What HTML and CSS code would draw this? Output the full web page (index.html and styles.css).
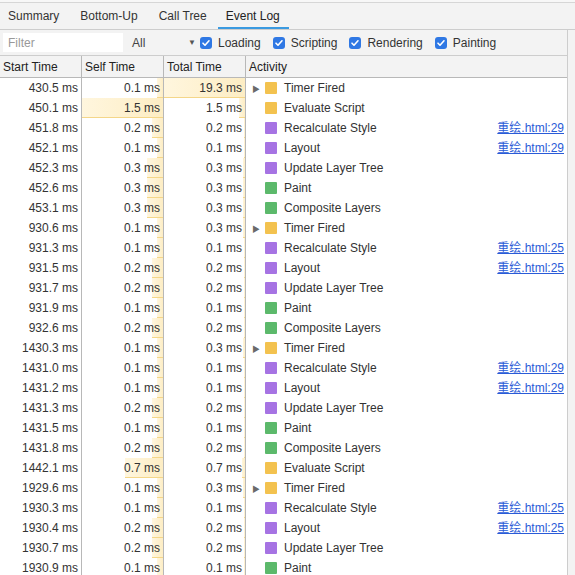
FILE: index.html
```html
<!DOCTYPE html>
<html lang="en">
<head>
  <meta charset="UTF-8">
  <title>Event Log</title>
  <link rel="stylesheet" href="styles.css">
</head>
<body>
  <div class="ruler"></div>
  <div class="tabs">
    <span class="tab">Summary</span>
    <span class="tab">Bottom-Up</span>
    <span class="tab">Call Tree</span>
    <span class="tab active">Event Log</span>
  </div>
  <div class="main">
    <div class="panel">
      <div class="toolbar">
        <input class="filter" placeholder="Filter">
        <span class="select">All <span class="caret">&#9660;</span></span>
        <label class="cb"><span class="box"><svg viewBox="0 0 12 12"><path d="M3 6.2l2 2 4-4.4" fill="none" stroke="#fff" stroke-width="1.6" stroke-linecap="round" stroke-linejoin="round"/></svg></span>Loading</label>
        <label class="cb"><span class="box"><svg viewBox="0 0 12 12"><path d="M3 6.2l2 2 4-4.4" fill="none" stroke="#fff" stroke-width="1.6" stroke-linecap="round" stroke-linejoin="round"/></svg></span>Scripting</label>
        <label class="cb"><span class="box"><svg viewBox="0 0 12 12"><path d="M3 6.2l2 2 4-4.4" fill="none" stroke="#fff" stroke-width="1.6" stroke-linecap="round" stroke-linejoin="round"/></svg></span>Rendering</label>
        <label class="cb"><span class="box"><svg viewBox="0 0 12 12"><path d="M3 6.2l2 2 4-4.4" fill="none" stroke="#fff" stroke-width="1.6" stroke-linecap="round" stroke-linejoin="round"/></svg></span>Painting</label>
      </div>
      <div class="grid head">
        <div class="cell">Start Time</div>
        <div class="cell">Self Time</div>
        <div class="cell">Total Time</div>
        <div class="cell">Activity</div>
      </div>
      <div class="rows" id="rows"></div>
    </div>
    <div class="side"></div>
  </div>
  <script>
    // start, self, total, name, color, expandable, link
    const events = [
      ['430.5', '0.1', '19.3', 'Timer Fired', 'y', 1, ''],
      ['450.1', '1.5', '1.5', 'Evaluate Script', 'y', 0, ''],
      ['451.8', '0.2', '0.2', 'Recalculate Style', 'p', 0, '29'],
      ['452.1', '0.1', '0.1', 'Layout', 'p', 0, '29'],
      ['452.3', '0.3', '0.3', 'Update Layer Tree', 'p', 0, ''],
      ['452.6', '0.3', '0.3', 'Paint', 'g', 0, ''],
      ['453.1', '0.3', '0.3', 'Composite Layers', 'g', 0, ''],
      ['930.6', '0.1', '0.3', 'Timer Fired', 'y', 1, ''],
      ['931.3', '0.1', '0.1', 'Recalculate Style', 'p', 0, '25'],
      ['931.5', '0.2', '0.2', 'Layout', 'p', 0, '25'],
      ['931.7', '0.2', '0.2', 'Update Layer Tree', 'p', 0, ''],
      ['931.9', '0.1', '0.1', 'Paint', 'g', 0, ''],
      ['932.6', '0.2', '0.2', 'Composite Layers', 'g', 0, ''],
      ['1430.3', '0.1', '0.3', 'Timer Fired', 'y', 1, ''],
      ['1431.0', '0.1', '0.1', 'Recalculate Style', 'p', 0, '29'],
      ['1431.2', '0.1', '0.1', 'Layout', 'p', 0, '29'],
      ['1431.3', '0.2', '0.2', 'Update Layer Tree', 'p', 0, ''],
      ['1431.5', '0.1', '0.1', 'Paint', 'g', 0, ''],
      ['1431.8', '0.2', '0.2', 'Composite Layers', 'g', 0, ''],
      ['1442.1', '0.7', '0.7', 'Evaluate Script', 'y', 0, ''],
      ['1929.6', '0.1', '0.3', 'Timer Fired', 'y', 1, ''],
      ['1930.3', '0.1', '0.1', 'Recalculate Style', 'p', 0, '25'],
      ['1930.4', '0.2', '0.2', 'Layout', 'p', 0, '25'],
      ['1930.7', '0.2', '0.2', 'Update Layer Tree', 'p', 0, ''],
      ['1930.9', '0.1', '0.1', 'Paint', 'g', 0, '']
    ];
    const maxSelf = 1.5, maxTotal = 19.3;
    const rows = document.getElementById('rows');
    function barCell(v, max) {
      const w = Math.max(1, Math.round(parseFloat(v) / max * 100));
      return '<div class="cell num bar"><span class="fill" style="width:' + w + '%"></span><span class="t">' + v + ' ms</span></div>';
    }
    events.forEach(e => {
      const row = document.createElement('div');
      row.className = 'grid row';
      row.innerHTML =
        '<div class="cell num">' + e[0] + ' ms</div>' +
        barCell(e[1], maxSelf) +
        barCell(e[2], maxTotal) +
        '<div class="cell act">' +
          '<span class="arrow">' + (e[5] ? '&#9654;' : '') + '</span>' +
          '<span class="sw ' + e[4] + '"></span>' +
          '<span class="name">' + e[3] + '</span>' +
          (e[6] ? '<a class="link">重绘.html:' + e[6] + '</a>' : '') +
        '</div>';
      rows.appendChild(row);
    });
  </script>
</body>
</html>
```
FILE: styles.css
```css
html, body {
  margin: 0;
  padding: 0;
  height: 100%;
  overflow: hidden;
}
body {
  background: #f3f3f3;
  font-family: "Liberation Sans", Arial, "Noto Sans CJK SC", sans-serif;
  font-size: 12px;
  color: #333;
}
.ruler {
  height: 2px;
  background: #f7f7f7;
  border-bottom: 1px solid #d6d6d6;
}
.tabs {
  display: flex;
  height: 26px;
  border-bottom: 1px solid #cdcdcd;
  background: #f3f3f3;
}
.tab {
  display: flex;
  align-items: center;
  padding: 0 9px 0 8px;
  font-size: 12px;
  color: #333;
  height: 100%;
  box-sizing: border-box;
}
.tab:nth-child(2) { margin-left: 4px; }
.tab:nth-child(3) { margin-left: 4px; }
.tab:nth-child(4) { margin-left: 2px; }
.tab.active {
  color: #222;
  border-bottom: 2px solid #3b9ae0;
  padding-top: 2px;
}
.main {
  display: flex;
  height: calc(100% - 30px);
}
.panel {
  width: 567px;
  background: #fff;
  border-right: 1px solid #cdcdcd;
  display: flex;
  flex-direction: column;
}
.side {
  flex: 1;
  background: #f3f3f3;
}
.toolbar {
  display: flex;
  flex-shrink: 0;
  align-items: center;
  height: 25px;
  background: #f3f3f3;
  border-bottom: 1px solid #cdcdcd;
  padding-left: 3px;
}
.filter {
  width: 120px;
  height: 19px;
  border: none;
  background: #fff;
  padding: 0 5px;
  box-sizing: border-box;
  font-family: inherit;
  font-size: 12px;
  outline: none;
}
.filter::placeholder { color: #999; }
.select {
  width: 68px;
  margin-left: 9px;
  display: flex;
  justify-content: space-between;
  align-items: center;
  color: #444;
}
.caret {
  font-size: 8px;
  color: #555;
  margin-right: 4px;
}
.cb {
  display: flex;
  align-items: center;
  margin-right: 12px;
  color: #333;
}
.box {
  width: 12px;
  height: 12px;
  border-radius: 3px;
  background: #2f78e4;
  margin-right: 6px;
  display: flex;
}
.box svg { width: 12px; height: 12px; }
.grid {
  display: grid;
  grid-template-columns: 82px 82px 82px 1fr;
}
.head {
  flex-shrink: 0;
  height: 21px;
  background: #f3f3f3;
  border-bottom: 1px solid #b8b8b8;
}
.rows { flex-shrink: 0; }
.cell {
  border-right: 1px solid #b8b8b8;
  display: flex;
  align-items: center;
  padding: 0 3px;
  white-space: nowrap;
  overflow: hidden;
}
.cell:last-child { border-right: none; }
.head .cell {
  padding-left: 3px;
  color: #222;
}
.row { height: 20px; }
.num { justify-content: flex-end; }
.bar { position: relative; }
.fill {
  position: absolute;
  right: 0;
  top: 0;
  bottom: 0;
  background: linear-gradient(90deg, #fff6de, #fdedc4);
  border-bottom: 1px solid #f4d689;
  box-sizing: border-box;
}
.t { position: relative; }
.act { padding-left: 6px; }
.arrow {
  width: 13px;
  font-size: 8px;
  color: #6a6a6a;
  display: inline-block;
}
.sw {
  width: 12px;
  height: 12px;
  margin-right: 7px;
  border-radius: 1px;
}
.sw.y { background: #f3c24f; }
.sw.p { background: #a673e3; }
.sw.g { background: #5cb96b; }
.name { flex: 1; }
.link {
  color: #2a5bd7;
  text-decoration: underline;
  line-height: 14px;
  height: 14px;
}
```
